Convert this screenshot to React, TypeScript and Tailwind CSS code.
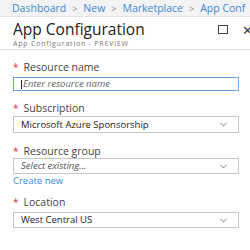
import { ChevronDown } from "lucide-react";

const font = { fontFamily: '"Open Sans", "Liberation Sans", sans-serif' };

function Label({ text }: { text: string }) {
  return (
    <div className="flex items-center h-[12px] text-[10.5px] text-[#444] leading-none">
      <span className="text-[#e0343c] mr-[5px] text-[10px]">*</span>
      {text}
    </div>
  );
}

function Select({ value, placeholder, h }: { value: string; placeholder?: boolean; h: string }) {
  return (
    <div className={`flex items-center justify-between ${h} border border-[#c6c6c6] bg-white pl-[7px] pr-[9px]`}>
      <span
        className={
          placeholder
            ? "text-[9.5px] italic text-[#555] leading-none"
            : "text-[9.5px] text-[#222] leading-none"
        }
      >
        {value}
      </span>
      <ChevronDown size={11} strokeWidth={1.4} className="text-[#333]" />
    </div>
  );
}

export default function App() {
  return (
    <div className="w-[250px] h-[250px] bg-white overflow-hidden" style={font}>
      <div className="h-[17px] bg-[#f3f3f3] border-b border-[#e2e2e2] flex items-center pl-[12px] whitespace-nowrap text-[10.5px] leading-none overflow-hidden">
        <span className="text-[#3a88d6]">Dashboard</span>
        <span className="text-[#888] mx-[6px] text-[9px]">&gt;</span>
        <span className="text-[#3a88d6]">New</span>
        <span className="text-[#888] mx-[6px] text-[9px]">&gt;</span>
        <span className="text-[#3a88d6]">Marketplace</span>
        <span className="text-[#888] mx-[6px] text-[9px]">&gt;</span>
        <span className="text-[#3a88d6]">App Conf</span>
      </div>

      <div className="h-[33px] border-b border-[#e4e4e4] flex justify-between pl-[13px] whitespace-nowrap">
        <div className="pt-[3px]">
          <div className="text-[15.5px] leading-[18px] text-[#222]">App Configuration</div>
          <div className="text-[7px] leading-[9px] text-[#777] tracking-[0.8px] mt-[1px]">App Configuration - PREVIEW</div>
        </div>
        <div className="flex items-start pt-[8px] gap-[14px] w-[32px] shrink-0 overflow-hidden">
          <div className="w-[10px] h-[9px] border border-[#444] shrink-0" />
          <span className="text-[13px] leading-[10px] text-[#444]">✕</span>
        </div>
      </div>

      <div className="pl-[13px] pr-[11px] pt-[11px]">
        <Label text="Resource name" />
        <div className="mt-[4px] h-[14px] border border-[#69a7e6] flex items-center pl-[7px]">
          <span className="w-px h-[9px] bg-[#222] mr-[1px]" />
          <span className="text-[9.5px] italic text-[#666] leading-none">Enter resource name</span>
        </div>

        <div className="mt-[11px]">
          <Label text="Subscription" />
        </div>
        <div className="mt-[2px]">
          <Select value="Microsoft Azure Sponsorship" h="h-[17px]" />
        </div>

        <div className="mt-[12px]">
          <Label text="Resource group" />
        </div>
        <div className="mt-[1px]">
          <Select value="Select existing..." placeholder h="h-[16px]" />
        </div>
        <div className="text-[9.5px] text-[#3a88d6] leading-[10px] mt-[2px]">Create new</div>

        <div className="mt-[10px]">
          <Label text="Location" />
        </div>
        <div className="mt-[4px]">
          <Select value="West Central US" h="h-[16px]" />
        </div>
      </div>
    </div>
  );
}
